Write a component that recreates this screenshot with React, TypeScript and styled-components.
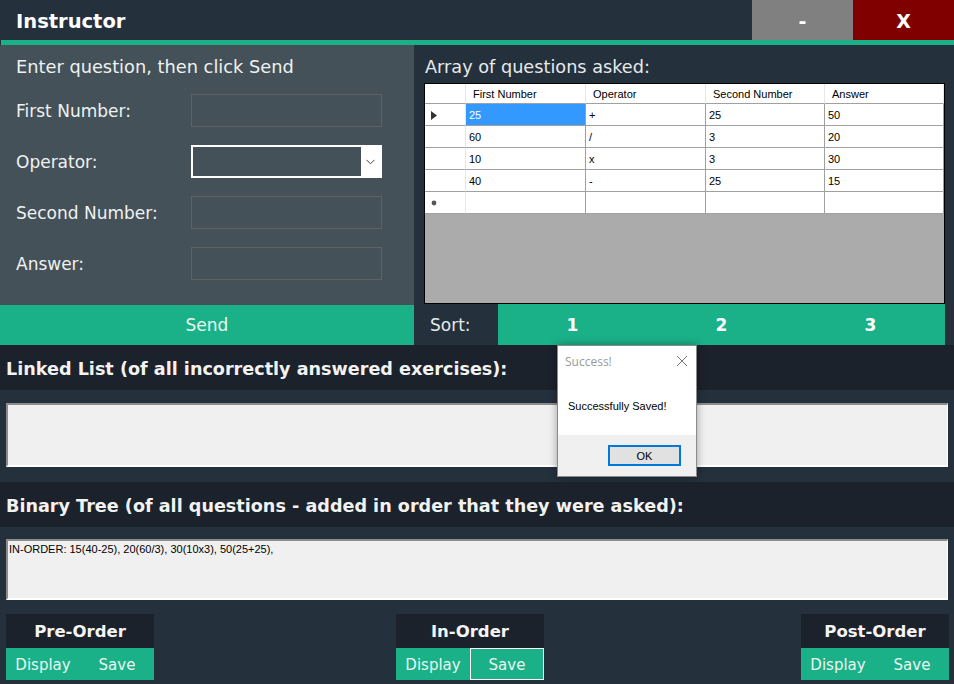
import React from "react";
import styled, { createGlobalStyle } from "styled-components";

const GOTHIC = `"DejaVu Sans", "Lato", sans-serif`;
const WIN = `"Liberation Sans", Arial, sans-serif`;
const GREEN = "#1ab188";
const DARK = "#1c222b";
const BASE = "#24303c";

const Global = createGlobalStyle`
  html, body { margin: 0; padding: 0; background: ${BASE}; }
  body { font-family: ${GOTHIC}; }
  * { box-sizing: border-box; }
`;

const Window = styled.div`
  position: relative;
  width: 954px;
  height: 684px;
  overflow: hidden;
  background: ${BASE};
  color: #f0f0f0;
  display: flex;
  flex-direction: column;
`;

const TitleBar = styled.div`
  display: flex;
  height: 40px;
`;

const Title = styled.div`
  flex: 1;
  display: flex;
  align-items: center;
  padding: 3px 0 0 16px;
  font-size: 19.5px;
  font-weight: 700;
  color: #ffffff;
`;

const WinButton = styled.div<{ $bg: string }>`
  width: 101px;
  display: flex;
  align-items: center;
  justify-content: center;
  padding-top: 2px;
  background: ${(p) => p.$bg};
  color: #ffffff;
  font-size: 19px;
  font-weight: 700;
`;

const Accent = styled.div`
  height: 5px;
  margin-left: 1px;
  background: ${GREEN};
`;

const Top = styled.div`
  display: flex;
  height: 300px;
`;

const FormPanel = styled.div`
  width: 414px;
  background: #445158;
  display: flex;
  flex-direction: column;
`;

const FormBody = styled.div`
  flex: 1;
  padding: 11px 0 0 16px;
  display: flex;
  flex-direction: column;
  gap: 18px;
`;

const Heading = styled.div`
  font-size: 17.8px;
  line-height: 22px;
  color: #eef2f2;
  margin-bottom: -2px;
`;

const Field = styled.div`
  display: grid;
  grid-template-columns: 175px 191px;
  align-items: center;
`;

const Label = styled.div`
  font-size: 17px;
  color: #eef2f2;
`;

const TextInput = styled.div`
  height: 33px;
  border: 1px solid #5e6266;
  background: #445158;
`;

const Combo = styled.div`
  height: 33px;
  border: 2px solid #ffffff;
  display: flex;
  background: #445158;
`;

const ComboArrow = styled.div`
  width: 19px;
  margin-left: auto;
  background: #ffffff;
  display: flex;
  align-items: center;
  justify-content: center;
`;

const WideButton = styled.div`
  height: 40px;
  background: ${GREEN};
  display: flex;
  align-items: center;
  justify-content: center;
  font-size: 17px;
  color: #e8f6f1;
`;

const RightPanel = styled.div`
  flex: 1;
  display: flex;
  flex-direction: column;
  padding: 0 9px 0 10px;
`;

const GridCaption = styled.div`
  height: 38px;
  display: flex;
  align-items: center;
  padding: 6px 0 0 1px;
  font-size: 17.7px;
  color: #e6eaea;
`;

const DataGrid = styled.div`
  height: 221px;
  border: 1px solid #000;
  background: #ababab;
  display: grid;
  grid-template-columns: 41px 120px 120px 119px 1fr;
  grid-template-rows: 20px repeat(5, 22px);
  align-content: start;
  font-family: ${WIN};
  font-size: 11px;
  color: #000;
`;

const Cell = styled.div<{ $head?: boolean; $sel?: boolean; $rowHead?: boolean }>`
  background: ${(p) => (p.$sel ? "#3399ff" : "#ffffff")};
  color: ${(p) => (p.$sel ? "#ffffff" : "#000000")};
  border-right: 1px solid ${(p) => (p.$head || p.$rowHead ? "#e6e6e6" : "#a0a0a0")};
  border-bottom: 1px solid #a0a0a0;
  display: flex;
  align-items: center;
  padding-left: ${(p) => (p.$head ? "7px" : p.$rowHead ? "6px" : "3px")};
  padding-top: 1px;
  white-space: nowrap;
  overflow: hidden;
`;

const SortRow = styled.div`
  height: 41px;
  display: flex;
`;

const SortLabel = styled.div`
  width: 74px;
  display: flex;
  align-items: center;
  padding-left: 6px;
  font-size: 17px;
  color: #e6eaea;
`;

const SortButtons = styled.div`
  flex: 1;
  background: ${GREEN};
  display: grid;
  grid-template-columns: repeat(3, 1fr);
`;

const SortButton = styled.div`
  display: flex;
  align-items: center;
  justify-content: center;
  font-size: 17px;
  font-weight: 700;
  color: #ffffff;
`;

const SectionHeader = styled.div`
  height: 45px;
  background: ${DARK};
  display: flex;
  align-items: center;
  padding: 3px 0 0 6px;
  font-size: 17.6px;
  font-weight: 700;
  color: #f2f2f2;
`;

const BoxArea = styled.div<{ $pad: string }>`
  padding: ${(p) => p.$pad};
`;

const OutputBox = styled.div<{ $h: number }>`
  height: ${(p) => p.$h}px;
  background: #f0f0f0;
  border-style: solid;
  border-width: 2px 1px 2px 2px;
  border-color: #8c8c8c #ffffff #ffffff #8c8c8c;
  font-family: ${WIN};
  font-size: 11px;
  color: #000;
  padding: 2px 0 0 1px;
`;

const TraversalRow = styled.div`
  display: grid;
  grid-template-columns: 148px 242px 148px 257px 148px;
  padding: 14px 0 0 6px;
`;

const Traversal = styled.div<{ $col: number }>`
  grid-column: ${(p) => p.$col};
  display: flex;
  flex-direction: column;
`;

const TraversalTitle = styled.div`
  height: 34px;
  background: ${DARK};
  display: flex;
  align-items: center;
  justify-content: center;
  font-size: 16.5px;
  font-weight: 700;
  color: #f4f4f4;
`;

const Actions = styled.div`
  height: 32px;
  background: ${GREEN};
  display: grid;
  grid-template-columns: 1fr 1fr;
`;

const Action = styled.div<{ $active?: boolean }>`
  display: flex;
  align-items: center;
  justify-content: center;
  padding-top: 1px;
  font-size: 15px;
  color: #e8f6f1;
  border: 1px solid ${(p) => (p.$active ? "#ffffff" : "transparent")};
`;

const Dialog = styled.div`
  position: absolute;
  left: 557px;
  top: 345px;
  width: 140px;
  height: 132px;
  background: #ffffff;
  border: 1px solid #8a8a8a;
  box-shadow: 0 0 8px rgba(0, 0, 0, 0.35);
  display: flex;
  flex-direction: column;
  font-family: ${WIN};
  color: #000;
`;

const DialogTitle = styled.div`
  height: 30px;
  display: flex;
  align-items: center;
  justify-content: space-between;
  padding: 0 8px 0 7px;
  font-family: "Open Sans", ${WIN};
  font-size: 12px;
  color: #9a9a9a;
`;

const DialogBody = styled.div`
  flex: 1;
  display: flex;
  align-items: center;
  padding: 0 0 0 10px;
  font-size: 11px;
`;

const DialogFooter = styled.div`
  height: 41px;
  background: #f0f0f0;
  display: flex;
  justify-content: flex-end;
  padding: 10px 15px 0 0;
`;

const OkButton = styled.div`
  width: 73px;
  height: 21px;
  border: 2px solid #0078d7;
  background: #e1e1e1;
  display: flex;
  align-items: center;
  justify-content: center;
  font-size: 11px;
`;

const rows = [
  ["25", "+", "25", "50"],
  ["60", "/", "3", "20"],
  ["10", "x", "3", "30"],
  ["40", "-", "25", "15"],
  ["", "", "", ""],
];

const RowArrow = () => (
  <svg width="6" height="9" viewBox="0 0 6 9">
    <path d="M0 0 L6 4.5 L0 9 Z" fill="#333" />
  </svg>
);

const NewRowMark = () => (
  <svg width="6" height="6" viewBox="0 0 6 6">
    <circle cx="3" cy="3" r="2.4" fill="#555" />
  </svg>
);

export default function App() {
  return (
    <>
      <Global />
      <Window>
        <TitleBar>
          <Title>Instructor</Title>
          <WinButton $bg="#808080">-</WinButton>
          <WinButton $bg="#800000">X</WinButton>
        </TitleBar>
        <Accent />
        <Top>
          <FormPanel>
            <FormBody>
              <Heading>Enter question, then click Send</Heading>
              <Field>
                <Label>First Number:</Label>
                <TextInput />
              </Field>
              <Field>
                <Label>Operator:</Label>
                <Combo>
                  <ComboArrow>
                    <svg width="9" height="6" viewBox="0 0 9 6">
                      <path d="M0.5 0.8 L4.5 4.8 L8.5 0.8" stroke="#444" strokeWidth="1" fill="none" />
                    </svg>
                  </ComboArrow>
                </Combo>
              </Field>
              <Field>
                <Label>Second Number:</Label>
                <TextInput />
              </Field>
              <Field>
                <Label>Answer:</Label>
                <TextInput />
              </Field>
            </FormBody>
            <WideButton>Send</WideButton>
          </FormPanel>
          <RightPanel>
            <GridCaption>Array of questions asked:</GridCaption>
            <DataGrid>
              <Cell $head $rowHead />
              <Cell $head>First Number</Cell>
              <Cell $head>Operator</Cell>
              <Cell $head>Second Number</Cell>
              <Cell $head>Answer</Cell>
              {rows.map((r, i) => (
                <React.Fragment key={i}>
                  <Cell $rowHead>
                    {i === 0 ? <RowArrow /> : i === rows.length - 1 ? <NewRowMark /> : null}
                  </Cell>
                  {r.map((v, j) => (
                    <Cell key={j} $sel={i === 0 && j === 0}>
                      {v}
                    </Cell>
                  ))}
                </React.Fragment>
              ))}
            </DataGrid>
            <SortRow>
              <SortLabel>Sort:</SortLabel>
              <SortButtons>
                <SortButton>1</SortButton>
                <SortButton>2</SortButton>
                <SortButton>3</SortButton>
              </SortButtons>
            </SortRow>
          </RightPanel>
        </Top>
        <SectionHeader>Linked List (of all incorrectly answered exercises):</SectionHeader>
        <BoxArea $pad="13px 6px 15px 6px">
          <OutputBox $h={64} />
        </BoxArea>
        <SectionHeader>Binary Tree (of all questions - added in order that they were asked):</SectionHeader>
        <BoxArea $pad="12px 6px 0 6px">
          <OutputBox $h={61}>IN-ORDER: 15(40-25), 20(60/3), 30(10x3), 50(25+25),</OutputBox>
        </BoxArea>
        <TraversalRow>
          <Traversal $col={1}>
            <TraversalTitle>Pre-Order</TraversalTitle>
            <Actions>
              <Action>Display</Action>
              <Action>Save</Action>
            </Actions>
          </Traversal>
          <Traversal $col={3}>
            <TraversalTitle>In-Order</TraversalTitle>
            <Actions>
              <Action>Display</Action>
              <Action $active>Save</Action>
            </Actions>
          </Traversal>
          <Traversal $col={5}>
            <TraversalTitle>Post-Order</TraversalTitle>
            <Actions>
              <Action>Display</Action>
              <Action>Save</Action>
            </Actions>
          </Traversal>
        </TraversalRow>
        <Dialog>
          <DialogTitle>
            <span>Success!</span>
            <svg width="12" height="12" viewBox="0 0 12 12">
              <path d="M1 1 L11 11 M11 1 L1 11" stroke="#777" strokeWidth="1" />
            </svg>
          </DialogTitle>
          <DialogBody>Successfully Saved!</DialogBody>
          <DialogFooter>
            <OkButton>OK</OkButton>
          </DialogFooter>
        </Dialog>
      </Window>
    </>
  );
}
